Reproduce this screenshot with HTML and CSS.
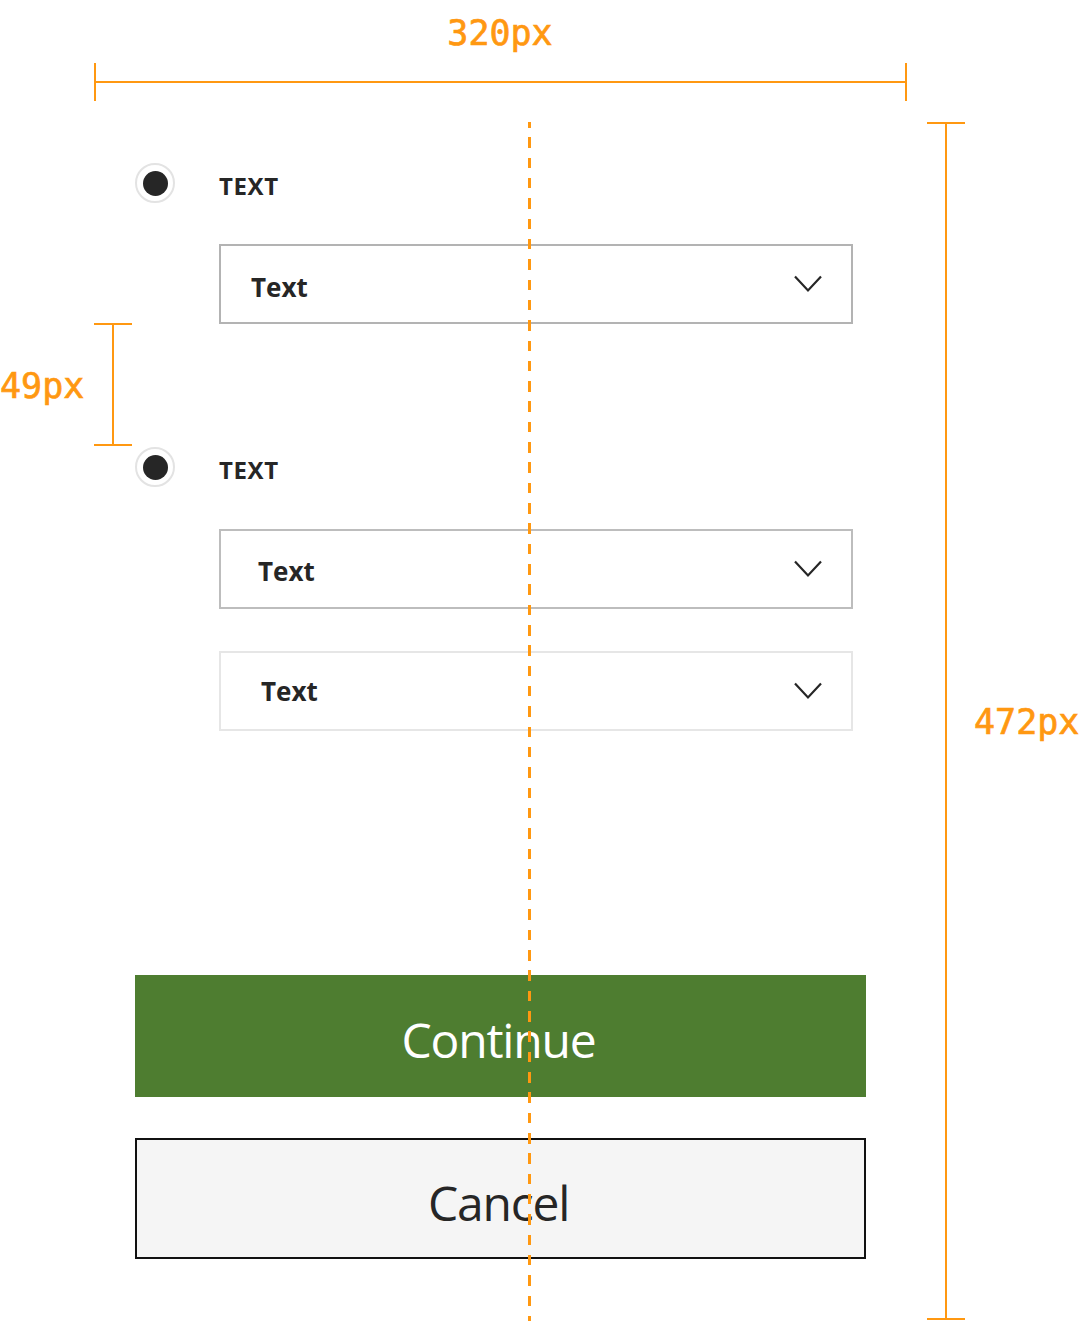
FILE: index.html
```html
<!DOCTYPE html>
<html lang="en">
<head>
<meta charset="utf-8">
<title>Spec</title>
<link rel="stylesheet" href="styles.css">
</head>
<body>
<div class="canvas">
  <main class="form">
    <div class="option-row">
      <span class="radio"><span class="radio-dot"></span></span>
      <span class="option-label">TEXT</span>
    </div>
    <div class="select select--a">
      <span class="select-text">Text</span>
      <svg class="chevron" width="28" height="18" viewBox="0 0 28 18"><path d="M1 1.5 L14 15.5 L27 1.5" fill="none" stroke="#262626" stroke-width="2.2"/></svg>
    </div>
    <div class="option-row option-row--second">
      <span class="radio"><span class="radio-dot"></span></span>
      <span class="option-label">TEXT</span>
    </div>
    <div class="select select--b">
      <span class="select-text">Text</span>
      <svg class="chevron" width="28" height="18" viewBox="0 0 28 18"><path d="M1 1.5 L14 15.5 L27 1.5" fill="none" stroke="#262626" stroke-width="2.2"/></svg>
    </div>
    <div class="select select--c">
      <span class="select-text">Text</span>
      <svg class="chevron" width="28" height="18" viewBox="0 0 28 18"><path d="M1 1.5 L14 15.5 L27 1.5" fill="none" stroke="#262626" stroke-width="2.2"/></svg>
    </div>
    <button class="btn btn--primary">Continue</button>
    <button class="btn btn--secondary">Cancel</button>
  </main>

  <div class="annotations">
    <div class="dim-label dim-label--top">320px</div>
    <div class="a-line a-line--top"></div>
    <div class="a-tick-v a-tick-v--left"></div>
    <div class="a-tick-v a-tick-v--right"></div>

    <div class="dashed-center"></div>

    <div class="a-vline a-vline--right"></div>
    <div class="a-tick-h a-tick-h--rt"></div>
    <div class="a-tick-h a-tick-h--rb"></div>
    <div class="dim-label dim-label--right">472px</div>

    <div class="a-vline a-vline--left"></div>
    <div class="a-tick-h a-tick-h--lt"></div>
    <div class="a-tick-h a-tick-h--lb"></div>
    <div class="dim-label dim-label--left">49px</div>
  </div>
</div>
</body>
</html>
```

FILE: styles.css
```css
* { box-sizing: border-box; }

html, body {
  margin: 0;
  padding: 0;
  background: #ffffff;
}

.canvas {
  position: relative;
  width: 1080px;
  height: 1321px;
  overflow: hidden;
  font-family: "Open Sans", "Noto Sans", sans-serif;
  color: #262626;
}

.form {
  display: flex;
  flex-direction: column;
  align-items: flex-start;
  padding: 163px 0 0 135px;
  width: 866px;
}

.option-row {
  display: flex;
  align-items: center;
  gap: 44px;
  height: 40px;
}

.option-row--second {
  margin-top: 123px;
}

.radio {
  width: 40px;
  height: 40px;
  border: 2px solid #e3e3e3;
  border-radius: 50%;
  display: flex;
  align-items: center;
  justify-content: center;
  background: #fff;
}

.radio-dot {
  width: 25px;
  height: 25px;
  border-radius: 50%;
  background: #262626;
}

.option-label {
  font-weight: 700;
  font-size: 24px;
  letter-spacing: 0.6px;
  padding-top: 6px;
  line-height: 32px;
}

.select {
  margin-left: 84px;
  margin-top: 41px;
  width: 634px;
  height: 80px;
  border: 2px solid #b3b3b3;
  background: #fff;
  display: flex;
  align-items: center;
  justify-content: space-between;
  padding: 0 29px 0 30px;
}

.select--a { padding-top: 6px; }
.select--a .chevron { margin-top: -6px; }
.select--b { margin-top: 42px; border-color: #bdbdbd; padding-left: 37px; padding-top: 3px; }
.select--b .chevron { margin-top: -3px; }
.select--c { margin-top: 42px; border-color: #e6e6e6; padding-left: 40px; }

.select-text {
  font-weight: 700;
  font-size: 26px;
  line-height: 34px;
}

.chevron {
  display: block;
}

.btn {
  display: flex;
  align-items: center;
  justify-content: center;
  width: 731px;
  font-family: "Open Sans", "Noto Sans", sans-serif;
  font-size: 48px;
  font-weight: 400;
  letter-spacing: -1.2px;
  line-height: 60px;
  padding: 8px 4px 0 0;
  margin: 0;
  cursor: pointer;
}

.btn--primary {
  margin-top: 244px;
  height: 122px;
  background: #4e7d30;
  color: #ffffff;
  border: none;
}

.btn--secondary {
  margin-top: 41px;
  height: 121px;
  background: #f5f5f5;
  color: #262626;
  border: 2px solid #111111;
}

/* Spec annotations drawn over the canvas */
.annotations {
  position: absolute;
  inset: 0;
  pointer-events: none;
}

.annotations > div {
  position: absolute;
}

.dim-label {
  font-family: "DejaVu Sans Mono", "Liberation Mono", monospace;
  font-size: 35px;
  line-height: 35px;
  color: #ff9811;
  -webkit-text-stroke: 0.7px #ff9811;
  white-space: nowrap;
}

.dim-label--top {
  left: 400px;
  width: 200px;
  top: 16px;
  text-align: center;
}

.dim-label--left {
  left: 0;
  top: 369px;
}

.dim-label--right {
  left: 974px;
  top: 705px;
}

.a-line--top {
  left: 95px;
  top: 81px;
  width: 811px;
  height: 2px;
  background: #ff9811;
}

.a-tick-v {
  top: 63px;
  width: 2px;
  height: 38px;
  background: #ff9811;
}
.a-tick-v--left { left: 94px; }
.a-tick-v--right { left: 905px; }

.dashed-center {
  left: 528px;
  top: 122px;
  width: 3px;
  height: 1199px;
  background-image: repeating-linear-gradient(to bottom, #ff9811 0, #ff9811 10.5px, transparent 10.5px, transparent 20.32px);
  background-position: 0 -5px;
}

.a-vline {
  width: 2px;
  background: #ff9811;
}
.a-vline--right { left: 945px; top: 123px; height: 1197px; }
.a-vline--left { left: 112px; top: 324px; height: 121px; }

.a-tick-h {
  height: 2px;
  width: 38px;
  background: #ff9811;
}
.a-tick-h--rt { left: 927px; top: 122px; }
.a-tick-h--rb { left: 927px; top: 1318px; }
.a-tick-h--lt { left: 94px; top: 323px; }
.a-tick-h--lb { left: 94px; top: 444px; }
```
